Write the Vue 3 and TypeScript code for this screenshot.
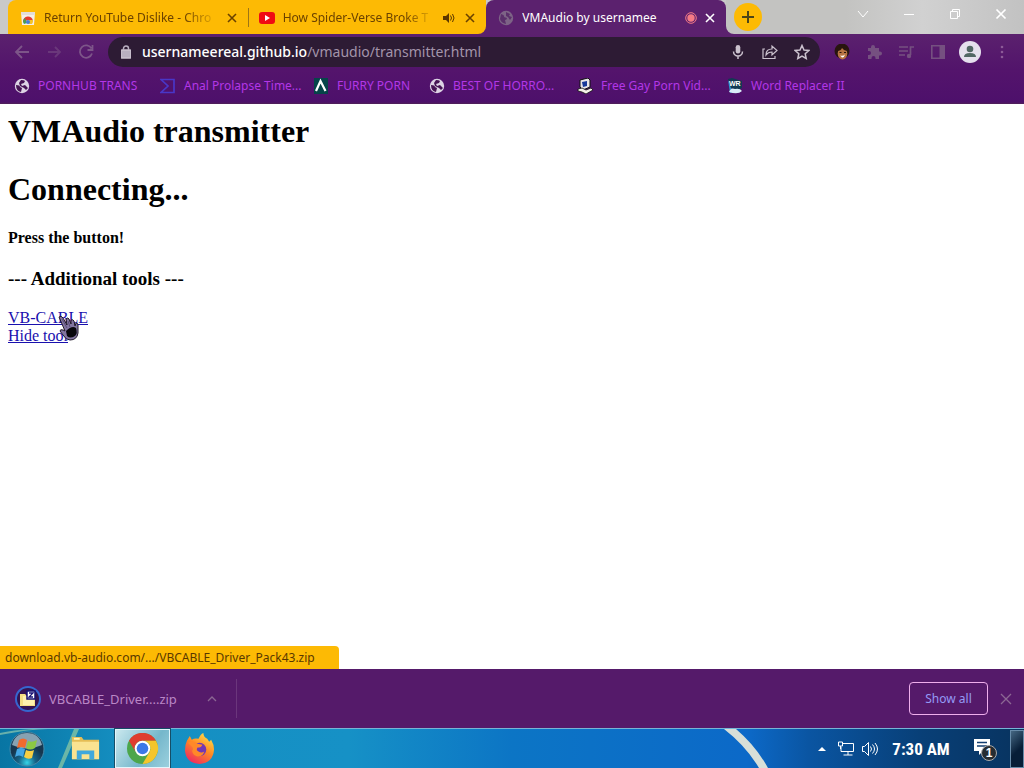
<script setup lang="ts">
interface Bookmark { label: string; icon: string }
const bookmarks: Bookmark[] = [
  { label: 'PORNHUB TRANS', icon: 'globe' },
  { label: 'Anal Prolapse Time...', icon: 'sigma' },
  { label: 'FURRY PORN', icon: 'lambda' },
  { label: 'BEST OF HORRO...', icon: 'globe' },
  { label: 'Free Gay Porn Vid...', icon: 'pc' },
  { label: 'Word Replacer II', icon: 'wr' },
]
</script>

<template>
  <div class="screen">
    <header class="tabstrip">
      <div class="tabs">
        <div class="tab">
          <svg class="i16" viewBox="0 0 16 16"><path d="M1 2h14l-1 13H2z" fill="#f3efe9" /><path d="M1 2h14v3H1z" fill="#e3ddd8" /><path d="M3 12a5 5 0 0 1 10-1l-5-1z" fill="#e53c30" /><path d="M3 12a5 5 0 0 1 2-4l2 5-3 1z" fill="#4a9d55" /><path d="M9 10h4a5 5 0 0 1-1 4H8z" fill="#f4c328" /><circle cx="8" cy="12" r="2" fill="#467dd8" /></svg>
          <span class="tab-title fade">Return YouTube Dislike - Chro</span>
          <button class="x" aria-label="Close tab"><svg viewBox="0 0 10 10"><path d="M1 1l8 8M9 1L1 9" /></svg></button>
        </div>
        <div class="tab second">
          <svg class="i16" viewBox="0 0 16 16"><rect y="2" width="16" height="12" rx="3" fill="#f00b13" /><path d="M6 5l5 3-5 3z" fill="#fff" /></svg>
          <span class="tab-title fade">How Spider-Verse Broke T</span>
          <svg class="i12 audio" viewBox="0 0 12 12"><path d="M0 4h3l3-3v10L3 8H0z" fill="#5b3600" /><path d="M7.500 3.500q2 2.500 0 5M9.500 2q3 4 0 8" fill="none" stroke="#5b3600" /></svg>
          <button class="x" aria-label="Close tab"><svg viewBox="0 0 10 10"><path d="M1 1l8 8M9 1L1 9" /></svg></button>
        </div>
        <div class="tab active">
          <svg class="i16 dim" viewBox="0 0 16 16"><circle cx="8" cy="8" r="7.200" fill="#8c8091" /><path d="M3 4q4 1 3 3l3 1q0 2-2 2l1 4q-5-1-6-5zM8 2l4 2-1 2 3 1-2 3-2-3-2-1z" fill="#5b356a" /></svg>
          <span class="tab-title">VMAudio by usernamee</span>
          <svg class="i12 rec" viewBox="0 0 12 12"><circle cx="6" cy="6" r="5.300" fill="none" stroke="#f47b85" /><circle cx="6" cy="6" r="3.700" fill="#f47b85" /></svg>
          <button class="x" aria-label="Close tab"><svg viewBox="0 0 10 10"><path d="M1 1l8 8M9 1L1 9" /></svg></button>
        </div>
      </div>
      <div class="frame">
        <button class="new-tab" aria-label="New tab"><svg viewBox="0 0 12 12"><path d="M6 0v12M0 6h12" /></svg></button>
        <div class="window-buttons">
          <button aria-label="Search tabs"><svg viewBox="0 0 12 12"><path d="M1 3l5 6 5-6" /></svg></button>
          <button aria-label="Minimize"><svg viewBox="0 0 12 12"><path d="M1 6.500h10" /></svg></button>
          <button aria-label="Restore"><svg viewBox="0 0 12 12"><path d="M1.500 3.500h7v7h-7zM3.500 3V1.500h7v7H9" /></svg></button>
          <button aria-label="Close"><svg viewBox="0 0 12 12"><path d="M1.500 1.500l9 9m0-9l-9 9" stroke-width="1.700" /></svg></button>
        </div>
      </div>
    </header>

    <nav class="toolbar">
      <div class="nav-buttons">
        <button aria-label="Back"><svg viewBox="0 0 16 16"><path d="M15 8H2M8 2L2 8l6 6" /></svg></button>
        <button aria-label="Forward" class="faint"><svg viewBox="0 0 16 16"><path d="M2 8h12M9 3l5 5-5 5" /></svg></button>
        <button aria-label="Reload"><svg viewBox="0 0 16 16"><path d="M13.500 4.500A6.200 6.200 0 1 0 14 9.500M14.500 1v5h-5" /></svg></button>
      </div>
      <div class="address">
        <svg class="lock" viewBox="0 0 10 14"><rect y="5" width="10" height="8" rx="1" fill="#b9afc0" /><path d="M2.500 5V3.500a2.500 2.500 0 0 1 5 0V5" fill="none" stroke="#b9afc0" stroke-width="1.500" /></svg>
        <a class="url" href="#"><b>usernameereal.github.io</b>/vmaudio/transmitter.html</a>
        <button aria-label="Voice search"><svg viewBox="0 0 16 16"><rect x="5.700" y="1" width="4.600" height="8.500" rx="2.300" fill="#cbc2ce" stroke="none" /><path d="M3.500 7.500a4.500 4.500 0 0 0 9 0M8 12v3" /></svg></button>
        <button aria-label="Share"><svg viewBox="0 0 16 16"><path d="M3 5H1v9.500h12V12M4 11q0-6 6-6V2l5 4.500-5 4.500V8Q6 8 4 11z" stroke-width="1.200" /></svg></button>
        <button aria-label="Bookmark"><svg viewBox="0 0 16 16"><path d="M8 1.500l2 4.500 4.800.500-3.600 3.200 1 4.800L8 12l-4.200 2.500 1-4.800L1.200 6.500 6 6z" stroke-width="1.500" /></svg></button>
      </div>
      <div class="extensions">
        <button aria-label="Face extension"><svg viewBox="0 0 16 16"><circle cx="8" cy="7" r="7.500" fill="#28150f" /><ellipse cx="8.500" cy="9.500" rx="4.800" ry="6" fill="#b77342" /><path d="M3 7q4 0 5-3 2 3 5 3l-1-5-4-1-4 2z" fill="#28150f" /><path d="M5.500 8.500h2M10 8.500h2" stroke="#28150f" /><path d="M6 11.500q3 1 5-1-1 3.500-3 3z" fill="#fff" /></svg></button>
        <button aria-label="Extensions"><svg viewBox="0 0 16 16"><path d="M2 4h3V3a2 2 0 0 1 4 0v1h4v3.500h1a2 2 0 0 1 0 4h-1V15H9.500v-1a2 2 0 0 0-4 0v1H2v-4h1a2 2 0 0 0 0-4H2z" fill="#755080" /></svg></button>
        <button aria-label="Media"><svg viewBox="0 0 16 16"><path d="M1 3h9M1 7h9M1 11h6M12.500 11V3H16" stroke="#755080" fill="none" stroke-width="1.700" /><circle cx="11" cy="12" r="2.200" fill="#755080" /></svg></button>
        <button aria-label="Side panel"><svg viewBox="0 0 16 16"><path d="M1.800 1.800h12.400v12.400H1.800z" fill="none" stroke="#755080" stroke-width="1.600" /><path d="M9.500 2H14v12H9.500z" fill="#755080" /></svg></button>
        <button class="avatar" aria-label="Profile"><svg viewBox="0 0 22 22"><circle cx="11" cy="11" r="11" fill="#e5e0ed" /><circle cx="11" cy="8" r="3.300" fill="#526764" /><path d="M5 16q0-4 6-4t6 4z" fill="#526764" /></svg></button>
        <button aria-label="Menu"><svg viewBox="0 0 16 16"><g fill="#8c5b97"><circle cx="8" cy="3" r="1.300" /><circle cx="8" cy="8" r="1.300" /><circle cx="8" cy="13" r="1.300" /></g></svg></button>
      </div>
    </nav>

    <nav class="bookmarks">
      <a v-for="b in bookmarks" :key="b.label" href="#">
        <svg v-if="b.icon === 'globe'" class="i16" viewBox="0 0 16 16"><circle cx="8" cy="8" r="7.200" fill="#ddd3e4" /><path d="M2 7q4 0 4 2l2 1-1 4q-5-1-5-7zM7 2q3 0 4 1l-1 2-3 1 1 2 3-1 3 3-2 2-2-2-4-2-1-3z" fill="#461354" /></svg>
        <svg v-else-if="b.icon === 'sigma'" class="i16" viewBox="0 0 16 16"><path d="M1 1.500h13v13H1l7-6.500z" fill="none" stroke="#4937c7" stroke-width="1.700" /></svg>
        <svg v-else-if="b.icon === 'lambda'" class="i16" viewBox="0 0 16 16"><path d="M1 0h14v16H1z" fill="#064449" /><path d="M3 13L7.500 3L12.500 13" fill="none" stroke="#fff" stroke-width="2.200" /></svg>
        <svg v-else-if="b.icon === 'pc'" class="i16" viewBox="0 0 16 16"><path d="M3 2l8-2 2 2v7l-7 3-3-3z" fill="#e8e5e8" stroke="#111" /><path d="M5 4l5-1v5l-4 1z" fill="#173999" /><path d="M1 11l4-1 4 2 5-2 2 2-7 4-4-2-4-1z" fill="#f5f2e9" stroke="#111" stroke-width=".8" /></svg>
        <svg v-else class="i16" viewBox="0 0 16 16"><path d="M1 1l4-1 10 3v7l-4 2-8-2z" fill="#123a53" /><path d="M1 2l3 8 4 4-5 1z" fill="#2c91c7" /><text x="2" y="8" class="wr">WR</text><path d="M2 14q2-5 6-3 5-1 7 2-4 4-13 1z" fill="#d8edf7" /></svg>
        <span>{{ b.label }}</span>
      </a>
    </nav>

    <main class="page">
      <h1>VMAudio transmitter</h1>
      <h1>Connecting...</h1>
      <h4>Press the button!</h4>
      <h3>--- Additional tools ---</h3>
      <a href="#">VB-CABLE</a><br /><a href="#">Hide tool</a>
      <svg class="cursor" viewBox="0 0 22 26"><path d="M1 2q2-2 4 1l4 7-1-6q2-2 3 0l2 5V5q2-1 3 1l1 5 1-3q2 0 2 2v8q-1 7-8 7-4 0-7-5l-3-4q0-2 3-1l2 1z" fill="#8275a0" stroke="#211a29" /><path d="M8 16q6-6 10-3 2 5-1 8-5 3-8 0z" fill="#08070c" /><path d="M4 4l5 9M10 6l2 6" stroke="#5b4d78" /></svg>
      <div class="status">download.vb-audio.com/.../VBCABLE_Driver_Pack43.zip</div>
    </main>

    <section class="shelf">
      <div class="download">
        <svg class="zip" viewBox="0 0 26 26"><circle cx="13" cy="13" r="12" fill="#351452" stroke="#3666cf" stroke-width="2" /><path d="M5 8h5l2 2h8v10H5z" fill="#f5df84" /><path d="M8 10h11v9H8z" fill="#fff1ae" /><path d="M12 5h8v8h-8z" fill="#fff" stroke="#171276" stroke-width="1.500" /><path d="M14 7h4l-4 4h4" fill="none" stroke="#171276" stroke-width="1.300" /></svg>
        <span>VBCABLE_Driver....zip</span>
        <button aria-label="Download options"><svg viewBox="0 0 12 12"><path d="M2 8l4-4 4 4" /></svg></button>
      </div>
      <button class="show-all">Show all</button>
      <button class="shelf-close" aria-label="Close downloads"><svg viewBox="0 0 12 12"><path d="M1 1l10 10M11 1L1 11" /></svg></button>
    </section>

    <footer class="taskbar">
      <svg class="wallpaper" viewBox="0 0 1024 39" preserveAspectRatio="none"><path d="M0 6Q30 0 48 0H34Q12 1 0 4z" fill="#a7d7b0" opacity=".6" /><path d="M74 0L58 39h4L79 0z" fill="#a9d99f" opacity=".6" /><path d="M724 0q22 17 35 39h9Q756 17 736 0z" fill="#d7dfd8" /></svg>
      <button class="start" aria-label="Start"><svg viewBox="0 0 36 36"><defs><radialGradient id="orb" cx=".5" cy=".9"><stop stop-color="#37d4e7" /><stop offset=".5" stop-color="#166387" /><stop offset="1" stop-color="#163750" /></radialGradient></defs><circle cx="18" cy="18" r="17" fill="url(#orb)" stroke="#468aaa" /><path d="M3 14Q6 2 18 2t15 12q-15 7-30 0z" fill="#c5dce6" opacity=".65" /><path d="M10 9q4-3 8 0l-2 8q-4-2-8 0z" fill="#f06b2e" /><path d="M19 10q4 2 9-1l-2 8q-5 3-9 0z" fill="#8bc844" /><path d="M8 18q4-2 8 0l-2 8q-4-3-8 0z" fill="#44a7e5" /><path d="M17 19q4 2 8 0l-2 8q-4 2-8-1z" fill="#f8cf43" /></svg></button>
      <button class="app" aria-label="File Explorer"><svg viewBox="0 0 32 32"><path d="M2 4h10l2 3h16v20H2z" fill="#e5bd55" /><path d="M4 5h6v2H4z" fill="#fff3b1" /><path d="M2 9h28v18H2z" fill="#fae391" /><path d="M7 18h18v9h-5v-5h-8v5H7z" fill="#3fa8dc" /></svg></button>
      <button class="app current" aria-label="Chrome"><svg viewBox="0 0 32 32"><circle cx="16" cy="16" r="16" fill="#4ca64b" /><path d="M2.100 8A16 16 0 0 1 29.900 8H16a8 8 0 0 0-7 12z" fill="#df3d2f" /><path d="M29.900 8A16 16 0 0 1 16 32l7-12a8 8 0 0 0-7-12z" fill="#f4c52c" /><circle cx="16" cy="16" r="8" fill="#fff" /><circle cx="16" cy="16" r="6" fill="#3b78e7" /></svg></button>
      <button class="app" aria-label="Firefox"><svg viewBox="0 0 32 32"><defs><linearGradient id="fox" x1=".8" y1="0" x2=".2" y2="1"><stop stop-color="#ffe34c" /><stop offset=".45" stop-color="#ff8b24" /><stop offset="1" stop-color="#ed2264" /></linearGradient></defs><path d="M3 8l3-5 2 4q3-2 7-1 2-5 5-6 0 4 4 6l2 3 2-2q3 5 3 10-1 14-15 15Q2 31 1 18q0-6 2-10z" fill="url(#fox)" /><circle cx="16" cy="17" r="7" fill="#7138b5" /><path d="M4 10q6-3 10 1l5 1q-1 3-5 3-2 3 1 4 3 2 6 0-2 6-8 5-6-2-4-9z" fill="#ff8928" /></svg></button>
      <div class="tray">
        <button aria-label="Hidden icons" class="i8"><svg viewBox="0 0 8 8"><path d="M0 6l4-4 4 4z" fill="#fff" /></svg></button>
        <button aria-label="Network" class="i16"><svg viewBox="0 0 16 16"><path d="M5 2.500h10.500v8H3V6M10 11v3M5.500 14h9M.5 1h4v4h-4zM2.500 5v3" fill="none" stroke="#fff" /></svg></button>
        <button aria-label="Volume" class="i16"><svg viewBox="0 0 16 16"><path d="M.5 5.500h2l4-4v13l-4-4h-2zM8.500 5.500q2 2.500 0 5M10.500 3.500q4 4.500 0 9M13 2q5 6 0 12" fill="none" stroke="#fff" /></svg></button>
        <time>7:30 AM</time>
        <button aria-label="Notifications, 1 new" class="notes"><svg viewBox="0 0 24 24"><path d="M1 2h16v12h-7l-4 4v-4H1z" fill="#fff" /><path d="M4 5.500h10M4 9h10" stroke="#123e70" stroke-width="1.500" /></svg><span class="badge">1</span></button>
      </div>
      <button class="desktop" aria-label="Show desktop"></button>
    </footer>
  </div>
</template>

<style>
body { margin: 0; }
</style>

<style scoped>
* { box-sizing: border-box; }
.screen { min-height: 100vh; display: flex; flex-direction: column; font: 12px/16px "Comic Sans MS", "Noto Sans", sans-serif; background: #fff; overflow: hidden; }
button { padding: 0; border: 0; background: none; flex-shrink: 0; color: inherit; font: inherit; }
svg { display: block; flex-shrink: 0; }
button svg { width: 100%; height: 100%; }
.i16 { width: 16px; height: 16px; }
.i12 { width: 12px; height: 12px; }
.i8 { width: 8px; height: 8px; }
.tabstrip { height: 34px; display: flex; background: #5b216e; }
.tabs { display: flex; flex: 0 1 726px; min-width: 0; padding-left: 8px; background: linear-gradient(90deg, #c9c9c9 16px, transparent 16px), linear-gradient(#c9c9c9 10px, #5b216e 10px); }
.tab { flex: 1; min-width: 0; display: flex; align-items: center; gap: 8px; padding: 1px 11px 0 12px; color: #6b4200; background: #fdba04; border-radius: 8px 0 0 0; }
.tab.second { padding-left: 11px; border-radius: 0 0 8px; position: relative; }
.tab.second::before { content: ""; position: absolute; left: 0; top: 8px; height: 19px; border-left: 1px solid #9d7515; }
.tab-title { flex: 1; overflow: hidden; white-space: nowrap; }
.fade { mask-image: linear-gradient(90deg, #000 80%, transparent); }
.tab.active { background: #5b216e; color: #fff; border-radius: 8px 8px 0 0; }
.dim { opacity: .7; }
.audio { margin-right: 2px; }
.x { width: 10px; height: 10px; }
.x svg { fill: none; stroke: currentColor; stroke-width: 1.600; }
.frame { flex: 1; display: flex; align-items: center; border-radius: 0 0 0 8px; background: linear-gradient(90deg, #c3c3c1 40%, #d1d1d1 66%, #c2c2c2); }
.new-tab { width: 28px; height: 28px; margin-left: 8px; padding: 8px; background: #fdba04; border-radius: 50%; }
.new-tab svg { stroke: #4c4519; stroke-width: 2; }
.window-buttons { margin-left: auto; display: flex; gap: 34px; padding: 0 17px 6px 0; }
.window-buttons button { width: 12px; height: 12px; }
.window-buttons svg { fill: none; stroke: #fff; }
.toolbar { height: 36px; display: flex; align-items: center; background: linear-gradient(#5b216e, #52146b); }
.nav-buttons { display: flex; gap: 16px; padding: 0 14px; }
.nav-buttons button, .address button { width: 16px; height: 16px; }
.nav-buttons svg { fill: none; stroke: #7d5589; stroke-width: 1.800; }
.nav-buttons .faint { opacity: .5; }
.address { flex: 1; min-width: 0; height: 30px; display: flex; align-items: center; gap: 16px; padding: 0 10px 0 13px; border-radius: 15px; background: #2d1b34; }
.lock { width: 10px; height: 14px; }
.url { flex: 1; overflow: hidden; white-space: nowrap; text-decoration: none; font-size: 14px; line-height: 20px; color: #a394aa; margin-left: -5px; }
.url b { font-weight: 500; color: #fff; }
.address svg { fill: none; stroke: #cbc2ce; stroke-width: 1.500; }
.extensions { display: flex; align-items: center; gap: 16px; padding: 0 14px; }
.extensions button { width: 16px; height: 16px; }
.extensions .avatar { width: 22px; height: 22px; margin: 0 -3px; }
.bookmarks { height: 34px; display: grid; grid-template-columns: 146px 153px 116px 148px 150px auto; align-items: center; padding: 0 14px 3px; background: linear-gradient(#54146c, #4d106b 94%, #502157); }
.bookmarks a { display: flex; gap: 8px; color: #b337e7; text-decoration: none; white-space: nowrap; }
.wr { font: 700 7px "Liberation Sans", sans-serif; fill: #fff; }
.page { flex: 1; position: relative; padding: 9px 8px; background: #fff; color: #000; font: 16px/18px "Liberation Serif", serif; }
h1 { margin: 0 0 21px; font-size: 32px; line-height: 37px; }
h4 { margin: 0 0 21px; font-size: 16px; line-height: 18px; }
h3 { margin: 0 0 19px; font-size: 19px; line-height: 22px; }
.page a { color: #1910ae; }
.cursor { position: absolute; left: 58px; top: 211px; width: 22px; height: 26px; fill: none; }
.status { position: absolute; left: 0; bottom: 0; width: 339px; max-width: 100%; height: 23px; padding: 4px 5px 3px; border-radius: 0 4px 0 0; background: #fdba04; color: #593800; font: 12px/16px "Comic Sans MS", "Noto Sans", sans-serif; white-space: nowrap; }
.shelf { height: 59px; display: flex; align-items: center; gap: 12px; padding-right: 12px; background: #551a6a; color: #ba87c6; }
.download { width: 237px; height: 39px; padding: 0 18px 0 15px; display: flex; align-items: center; gap: 8px; margin-right: auto; border-right: 1px solid #6b367c; font-size: 13px; white-space: nowrap; }
.download span { flex: 1; }
.zip { width: 26px; height: 26px; }
.download button, .shelf-close { width: 12px; height: 12px; }
.download button svg, .shelf-close svg { fill: none; stroke: #8b6793; stroke-width: 1.300; }
.show-all { width: 79px; height: 33px; border: 1px solid #efafec; border-radius: 4px; color: #949af6; }
.taskbar { height: 40px; position: relative; display: flex; align-items: center; padding-left: 9px; border-top: 1px solid #77b5d5; background: linear-gradient(90deg, #0875a3, #158fc1 12%, #1691c6 34%, #0c75c5 50%, #0c69c8 73%, #0a55a2 79%, #083f77 90%, #08335f); }
.wallpaper { position: absolute; inset: 0; width: 100%; height: 100%; }
.taskbar > button, .tray { position: relative; }
.start { width: 36px; height: 36px; margin-right: 13px; }
.app { width: 55px; height: 39px; padding: 3px 12px; margin-right: 2px; }
.current { border: 1px solid #e2f6fc; outline: 1px solid #164e67; outline-offset: 0; background: linear-gradient(125deg, #cae8ee, #75b7cb 60%, #9bd0de); padding: 3px 10px; }
.tray { margin-left: auto; display: flex; align-items: center; gap: 8px; color: #fff; }
.tray .i8 { margin-right: 4px; }
time { width: 60px; margin: 0 14px 0 5px; font: 700 20px/24px "Liberation Sans Narrow", "Roboto Condensed", "Open Sans Condensed", sans-serif; font-size: 17px; text-align: center; white-space: nowrap; }
.notes { width: 24px; height: 24px; position: relative; }
.badge { position: absolute; left: 8px; top: 8px; width: 16px; height: 16px; border: 1px solid #aaa; border-radius: 50%; background: #252c32; font: 700 12px/14px "Liberation Sans", sans-serif; }
.desktop { width: 14px; height: 38px; margin-left: 13px; border: 1px solid #678ba8; background: linear-gradient(135deg, #456782, #071e37 55%); }
</style>
